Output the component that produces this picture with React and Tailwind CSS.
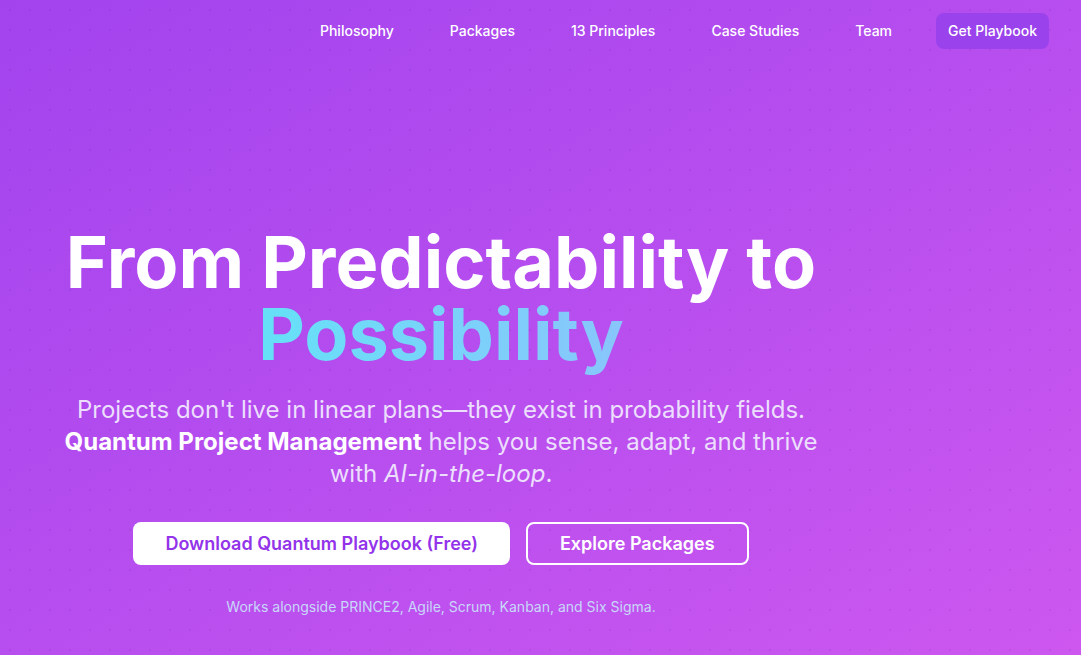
import React from "react";

const navLinks = ["Philosophy", "Packages", "13 Principles", "Case Studies", "Team"];

const App = () => {
  return (
    <div className="relative min-h-screen overflow-hidden bg-linear-to-br from-[#a243ee] to-[#cd57ef] font-['Inter',sans-serif]">
      {/* dotted texture */}
      <div className="pointer-events-none absolute inset-0 bg-[radial-gradient(circle_at_center,rgba(90,20,140,0.1)_0,rgba(90,20,140,0.1)_1px,transparent_1.6px)] bg-[size:20px_20px]" />

      <div className="relative">
        <header className="flex h-[61px] items-center justify-end gap-8 pr-8">
          {navLinks.map((link) => (
            <a key={link} href="#" className="rounded-lg px-3 py-2 text-sm font-medium text-white">
              {link}
            </a>
          ))}
          <a href="#" className="rounded-lg bg-[#9a43ec] px-3 py-2 text-sm font-medium text-white">
            Get Playbook
          </a>
        </header>

        <main className="px-8 pt-[165px]">
          <div className="flex w-[818px] flex-col items-center text-center">
            <h1 className="text-7xl leading-none font-bold text-white">
              From Predictability to
              <br />
              <span className="bg-linear-to-r from-[#64e1f7] to-[#88c5fb] bg-clip-text text-transparent">
                Possibility
              </span>
            </h1>

            <p className="mt-6 max-w-3xl text-2xl text-[#ecdffd]">
              Projects don't live in linear plans—they exist in probability fields.{" "}
              <strong className="font-bold text-white">Quantum Project Management</strong> helps you sense, adapt,
              and thrive with <em>AI-in-the-loop</em>.
            </p>

            <div className="mt-8 flex gap-4">
              <a href="#" className="flex h-[43px] items-center rounded-lg bg-white px-8 text-lg font-semibold text-[#9333ea]">
                Download Quantum Playbook (Free)
              </a>
              <a href="#" className="flex h-[43px] items-center rounded-lg border-2 border-white px-8 text-lg font-semibold text-white">
                Explore Packages
              </a>
            </div>

            <p className="mt-8 text-sm text-[#c8d7fa]">
              Works alongside PRINCE2, Agile, Scrum, Kanban, and Six Sigma.
            </p>
          </div>
        </main>
      </div>
    </div>
  );
};

export default App;
